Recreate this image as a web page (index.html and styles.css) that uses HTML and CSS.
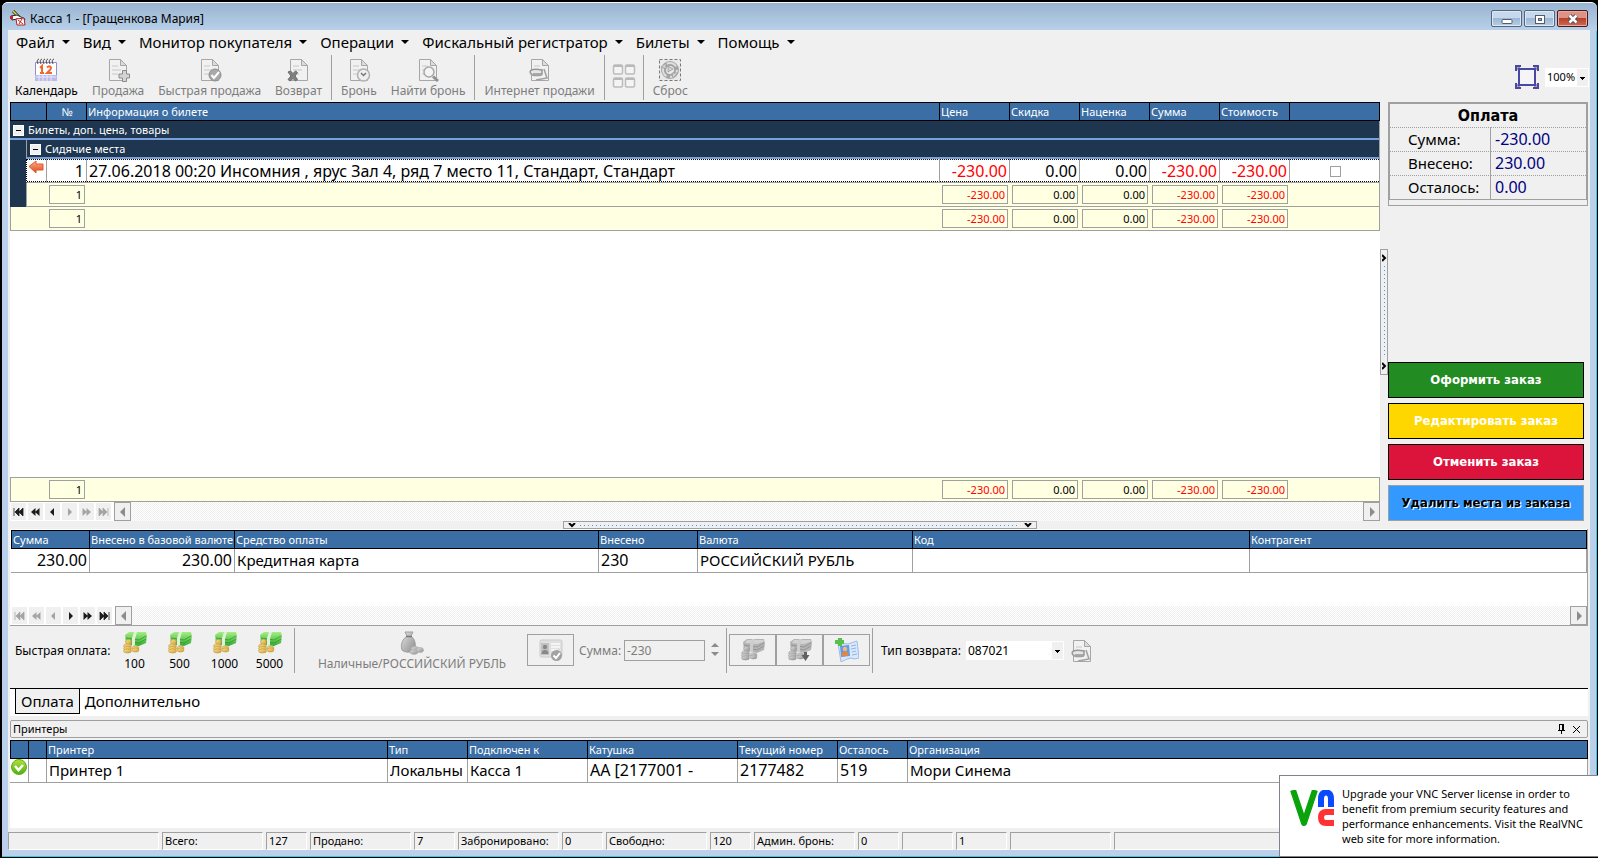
FILE: index.html
```html
<!DOCTYPE html>
<html lang="ru">
<head>
<meta charset="utf-8">
<title>Касса 1 - [Гращенкова Мария]</title>
<link rel="stylesheet" href="styles.css">
</head>
<body>
<svg class="defs" aria-hidden="true">
  <defs>
    <linearGradient id="g-green" x1="0" y1="0" x2="0" y2="1"><stop offset="0" stop-color="#a4ef84"/><stop offset="1" stop-color="#35a832"/></linearGradient>
    <linearGradient id="g-gold" x1="0" y1="0" x2="1" y2="1"><stop offset="0" stop-color="#fae596"/><stop offset="1" stop-color="#d09c34"/></linearGradient>
    <linearGradient id="g-gray" x1="0" y1="0" x2="1" y2="1"><stop offset="0" stop-color="#e2e2e2"/><stop offset="1" stop-color="#8c8c8c"/></linearGradient>
    <linearGradient id="g-red" x1="0" y1="0" x2="0" y2="1"><stop offset="0" stop-color="#ffb08a"/><stop offset="1" stop-color="#e0451a"/></linearGradient>
    <linearGradient id="g-ok" x1="0" y1="0" x2="0" y2="1"><stop offset="0" stop-color="#b4e23c"/><stop offset="1" stop-color="#4fae12"/></linearGradient>
  </defs>
  <symbol id="sheet" viewBox="0 0 24 24"><path d="M3.500 1.500h11l6 6v15h-17z" fill="#f1f1f1" stroke="#a6a6a6"/><path d="M14.500 1.500v6h6z" fill="#dcdcdc" stroke="#a6a6a6"/><path d="M6 8h6M6 12h9M6 16h6" stroke="#dcdcdc" stroke-width="2"/></symbol>
  <symbol id="calendar" viewBox="0 0 24 24"><path d="M1.500 4.500h21v18h-21z" fill="#fff" stroke="#8f8fd0"/><path d="M1 17h22v6H1z" fill="#b9b9ea"/><path d="M2 19h20M5 16v7M9 16v7M13 16v7M17 16v7" stroke="#e9e9fb"/><path d="M4 6q-2-4 1-5M7 6q-2-4 1-5M10 6q-2-4 1-5M13 6q-2-4 1-5M16 6q-2-4 1-5M19 6q-2-4 1-5" fill="none" stroke="#4a4a4a"/><path d="M6 10l2-2v7M6 15h4M13 9.500q2.500-2.500 4 0 .5 1.500-4 5.500h5" fill="none" stroke="#f2672b" stroke-width="2"/></symbol>
  <symbol id="sheet-plus" viewBox="0 0 24 24"><use href="#sheet" width="24" height="24"/><path d="M16.500 12.500h4v3.500h3v4h-3v3.500h-4v-3.500h-3.500v-4h3.500z" fill="#d4d4d4" stroke="#8a8a8a"/></symbol>
  <symbol id="sheet-check" viewBox="0 0 24 24"><use href="#sheet" width="24" height="24"/><circle cx="17" cy="17" r="6" fill="#a9a9a9" stroke="#8d8d8d"/><path d="M13.500 17l2.500 3 5-6" fill="none" stroke="#fff" stroke-width="2"/></symbol>
  <symbol id="sheet-x" viewBox="0 0 24 24"><use href="#sheet" width="24" height="24"/><path d="M1 14l2.500-1L6 15.500 8.500 13l2 1.500L8 18l2.500 3.500-2 1.500L6 20.500 3 23l-2-1.500L4 18z" fill="#808080" stroke="#6b6b6b"/></symbol>
  <symbol id="sheet-clock" viewBox="0 0 24 24"><use href="#sheet" width="24" height="24"/><circle cx="16.500" cy="17" r="6" fill="#efefef" stroke="#b0b0b0" stroke-width="1.500"/><path d="M14 15l2.500 2.500 2.500-2.500" fill="none" stroke="#777" stroke-width="1.500"/></symbol>
  <symbol id="sheet-find" viewBox="0 0 24 24"><use href="#sheet" width="24" height="24"/><circle cx="13" cy="14" r="5" fill="#f4f4f4" stroke="#a6a6a6" stroke-width="1.500"/><path d="M17 18.500l5 4.500" stroke="#929292" stroke-width="3"/></symbol>
  <symbol id="sheet-web" viewBox="0 0 24 24"><use href="#sheet" width="24" height="24"/><path d="M2 14q1-4 12-2v4H5" fill="#e6e6e6" stroke="#969696" stroke-width="1.500"/><path d="M2 14q1 5 12 3M16 11l3 9-11 2" fill="none" stroke="#a0a0a0" stroke-width="1.500"/></symbol>
  <symbol id="windows" viewBox="0 0 24 24"><g fill="#f4f4f4" stroke="#bcbcbc" stroke-width="1.500"><rect x="1.500" y="1" width="9" height="9" rx="1.500"/><rect x="13.500" y="1" width="9" height="9" rx="1.500"/><rect x="1.500" y="14" width="9" height="9" rx="1.500"/><rect x="13.500" y="14" width="9" height="9" rx="1.500"/></g><path d="M2 2h8M14 2h8M2 15h8M14 15h8" stroke="#b8b8b8" stroke-width="2"/></symbol>
  <symbol id="reset" viewBox="0 0 24 24"><rect x="1.500" y="1.500" width="21" height="21" fill="#e9e9e9" stroke="#777" stroke-dasharray="3 2"/><circle cx="12" cy="12" r="6.500" fill="none" stroke="#a3a3a3" stroke-width="5"/><circle cx="12" cy="12" r="7" fill="none" stroke="#dedede" stroke-width="2" stroke-dasharray="11 3.500"/><path d="M10 8l5 3-5 3zM3 9l5-4v6zM15 20l5-5h-6z" fill="#d0d0d0" stroke="#949494" stroke-width=".7"/></symbol>
  <symbol id="fit" viewBox="0 0 24 24"><rect x="4" y="4" width="16" height="16" fill="#f5f5f7" stroke="#4848a5" stroke-width="2"/><path d="M1 6V1h5M18 1h5v5M23 18v5h-5M6 23H1v-5" fill="none" stroke="#4848a5" stroke-width="2"/><path d="M2.500 5V2.500H5M19 2.500h2.500V5M21.500 19v2.500H19M5 21.500H2.500V19" fill="none" stroke="#b78c9c"/></symbol>
  <symbol id="money" viewBox="0 0 24 24"><path d="M2 4l4-3h17l1 4-1 7-7 3-13-2z" fill="url(#g-green)"/><path d="M3 7l13 2 7-4M4 10l12 2 7-4" fill="none" stroke="#2a9a2e" stroke-width=".8"/><path d="M11 1h3l-2 7v6H9V7z" fill="#dff2d6"/><g fill="url(#g-gold)" stroke="#c39a3e" stroke-width=".6"><circle cx="5.500" cy="11" r="2.800"/><ellipse cx="4.500" cy="15" rx="4" ry="2"/><ellipse cx="4.500" cy="17.500" rx="4" ry="2"/><ellipse cx="4.500" cy="20" rx="4" ry="2"/><ellipse cx="12.500" cy="17" rx="3.500" ry="2"/><ellipse cx="12.500" cy="19" rx="3.500" ry="2"/></g></symbol>
  <symbol id="money-gray" viewBox="0 0 24 24"><path d="M2 4l4-3h17l1 4-1 7-7 3-13-2z" fill="#b4b4b4"/><path d="M6 2h17l-1 2-6 2-12-1z" fill="#d2d2d2"/><path d="M3 7l13 2 7-4M4 10l12 2 7-4" fill="none" stroke="#8c8c8c" stroke-width=".8"/><path d="M11 1h3l-2 7v6H9V7z" fill="#cdcdcd"/><g fill="url(#g-gray)" stroke="#a0a0a0" stroke-width=".6"><circle cx="5.500" cy="11" r="2.800"/><ellipse cx="4.500" cy="15" rx="4" ry="2"/><ellipse cx="4.500" cy="17.500" rx="4" ry="2"/><ellipse cx="4.500" cy="20" rx="4" ry="2"/><ellipse cx="12.500" cy="17" rx="3.500" ry="2"/><ellipse cx="12.500" cy="19" rx="3.500" ry="2"/></g></symbol>
  <symbol id="money-down" viewBox="0 0 24 24"><use href="#money-gray" width="24" height="24"/><path d="M16 14h3v3h2.500l-4 6-4-6H16z" fill="#606060"/></symbol>
  <symbol id="bag" viewBox="0 0 24 24"><path d="M5 1h8l-2 4c4 3 5 8 4 13-1 4-11 4-13 1C0 13 3 8 7 5z" fill="url(#g-gray)" stroke="#a0a0a0"/><path d="M6 5.500h6" stroke="#777" stroke-width="1.500"/><g fill="url(#g-gray)" stroke="#b0b0b0" stroke-width=".8"><ellipse cx="15" cy="18" rx="4" ry="2.500"/><ellipse cx="20" cy="19" rx="3.500" ry="2.500"/><ellipse cx="14" cy="21" rx="4" ry="2.300"/></g></symbol>
  <symbol id="card" viewBox="0 0 24 24"><rect x="1" y="2" width="22" height="17" rx="1.500" fill="#e0e0e0" stroke="#cbcbcb"/><path d="M2 5h8v12H2z" fill="#c2c2c2"/><circle cx="6" cy="9" r="2.200" fill="#888"/><path d="M2.500 16q0-4 3.500-4t3.500 4z" fill="#888"/><path d="M12 6h9M12 9h9M12 12h6" stroke="#fafafa" stroke-width="1.500"/><circle cx="17.500" cy="17.500" r="5.500" fill="#a2a2a2"/><path d="M14.500 17.500l2.500 2.500 4-5" fill="none" stroke="#fff" stroke-width="2"/></symbol>
  <symbol id="client" viewBox="0 0 24 24"><path d="M3 5l10 1 9-3 2 17-5 1-3-1-4 1-6 3z" fill="#d9e8fb" stroke="#9dbbe4"/><path d="M16 8l5-1M16 11l5-1M17 14l4-1M17 17l5-1" stroke="#8fb4e8"/><path d="M5 8l9-1 1 11-9 1z" fill="#5f9be8"/><circle cx="10" cy="11" r="2.300" fill="#f2b67e"/><path d="M6.500 18.500q0-5 3.500-5t3.500 4z" fill="#e5863a"/><path d="M3 0h4v2h2v4H7v2H3V6H0V2h3z" fill="#56c04a"/></symbol>
  <symbol id="app" viewBox="0 0 16 16"><path d="M3 1l6 6" stroke="#222" stroke-width="3"/><path d="M3 1l6 6" stroke="#e9e23a" stroke-width="1.500"/><path d="M1 6l6-1 8 4-1 2-7-2-5 1z" fill="#fff" stroke="#222"/><path d="M0 6h3v3H0z" fill="#d32020"/><path d="M6 9l8-1 1 7H7z" fill="#fff" stroke="#a22"/><path d="M8 10l5 4M12 9l-3 5" stroke="#d32020"/></symbol>
  <symbol id="arrow-left" viewBox="0 0 16 14"><path d="M1 6.500L8 1v3h7v6H8v3z" fill="url(#g-red)" stroke="#dc5a28"/></symbol>
  <symbol id="ok" viewBox="0 0 16 16"><circle cx="8" cy="8" r="7.500" fill="url(#g-ok)" stroke="#59b21a"/><path d="M4 7l3.500 4L12 6" fill="none" stroke="#fff" stroke-width="2.500"/></symbol>
  <symbol id="n-first" viewBox="0 0 11 8"><path d="M1 0v8M6 0v8L2 4zM10 0v8L6 4z" fill="currentColor" stroke="currentColor" stroke-width=".8"/></symbol>
  <symbol id="n-prevpage" viewBox="0 0 11 8"><path d="M5.500 0v8L1 4zM9.500 0v8L5 4z" fill="currentColor"/></symbol>
  <symbol id="n-prev" viewBox="0 0 11 8"><path d="M7 0v8L3 4z" fill="currentColor"/></symbol>
  <symbol id="n-next" viewBox="0 0 11 8"><path d="M4 0v8l4-4z" fill="currentColor"/></symbol>
  <symbol id="n-nextpage" viewBox="0 0 11 8"><path d="M1.500 0v8L6 4zM5.500 0v8L10 4z" fill="currentColor"/></symbol>
  <symbol id="n-last" viewBox="0 0 11 8"><path d="M10 0v8M1 0v8l4-4zM5 0v8l4-4z" fill="currentColor" stroke="currentColor" stroke-width=".8"/></symbol>
  <symbol id="tri-left" viewBox="0 0 6 10"><path d="M5 0v10L0 5z" fill="currentColor"/></symbol>
  <symbol id="tri-right" viewBox="0 0 6 10"><path d="M1 0v10l5-5z" fill="currentColor"/></symbol>
  <symbol id="chev-down" viewBox="0 0 8 5"><path d="M1 0l3 3 3-3" fill="none" stroke="#000" stroke-width="2"/></symbol>
  <symbol id="chev-right" viewBox="0 0 5 8"><path d="M0 1l3 3-3 3" fill="none" stroke="#000" stroke-width="2"/></symbol>
</svg>

<div class="window">
  <header class="titlebar">
    <svg class="app-icon"><use href="#app"/></svg>
    <h1 class="title">Касса 1 - [Гращенкова Мария]</h1>
    <div class="window-buttons">
      <button class="win-btn" aria-label="Свернуть"><svg width="12" height="12" viewBox="0 0 12 12"><rect x="1" y="6.500" width="10" height="4" rx="1" fill="#fff" stroke="#555b69"/></svg></button>
      <button class="win-btn" aria-label="Развернуть"><svg width="12" height="12" viewBox="0 0 12 12"><rect x="1.500" y="2.500" width="9" height="8" fill="#fff" stroke="#555b69"/><rect x="4.500" y="5.500" width="3" height="2" fill="#8fb0d0" stroke="#555b69"/></svg></button>
      <button class="win-btn win-close" aria-label="Закрыть"><svg width="12" height="12" viewBox="0 0 12 12"><path d="M2.500 2.500l7 7M9.500 2.500l-7 7" stroke="#4c4c5c" stroke-width="4.500"/><path d="M2.500 2.500l7 7M9.500 2.500l-7 7" stroke="#fff" stroke-width="2.500"/></svg></button>
    </div>
  </header>

  <div class="client">
    <nav class="menu">
      <button class="menu-item">Файл</button>
      <button class="menu-item">Вид</button>
      <button class="menu-item">Монитор покупателя</button>
      <button class="menu-item">Операции</button>
      <button class="menu-item">Фискальный регистратор</button>
      <button class="menu-item">Билеты</button>
      <button class="menu-item">Помощь</button>
    </nav>

    <div class="toolbar">
      <button class="tool tool-on"><svg><use href="#calendar"/></svg>Календарь</button>
      <button class="tool"><svg><use href="#sheet-plus"/></svg>Продажа</button>
      <button class="tool"><svg><use href="#sheet-check"/></svg>Быстрая продажа</button>
      <button class="tool"><svg><use href="#sheet-x"/></svg>Возврат</button>
      <span class="sep"></span>
      <button class="tool"><svg><use href="#sheet-clock"/></svg>Бронь</button>
      <button class="tool"><svg><use href="#sheet-find"/></svg>Найти бронь</button>
      <span class="sep"></span>
      <button class="tool"><svg><use href="#sheet-web"/></svg>Интернет продажи</button>
      <span class="sep"></span>
      <button class="tool tool-icon" aria-label="Окна"><svg><use href="#windows"/></svg></button>
      <span class="sep"></span>
      <button class="tool"><svg><use href="#reset"/></svg>Сброс</button>
      <div class="zoom">
        <button class="zoom-fit" aria-label="По размеру окна"><svg><use href="#fit"/></svg></button>
        <select class="combo combo-zoom" aria-label="Масштаб"><option>100%</option></select>
      </div>
    </div>

    <div class="work">
      <section class="order">
        <table class="grid order-grid">
          <colgroup><col class="w-indent"><col class="w-mark"><col class="w-num"><col><col class="w-sum"><col class="w-sum"><col class="w-sum"><col class="w-sum"><col class="w-sum"><col class="w-flag"></colgroup>
          <thead>
            <tr><th colspan="2"></th><th class="center">№</th><th>Информация о билете</th><th>Цена</th><th>Скидка</th><th>Наценка</th><th>Сумма</th><th>Стоимость</th><th></th></tr>
          </thead>
          <tbody>
            <tr class="group"><td colspan="10"><button class="toggle" aria-label="Свернуть группу"></button>Билеты, доп. цена, товары</td></tr>
            <tr class="group group-sub"><td class="indent"></td><td colspan="9"><button class="toggle" aria-label="Свернуть группу"></button>Сидячие места</td></tr>
            <tr class="ticket"><td class="indent"></td><td class="mark"><svg width="16" height="14"><use href="#arrow-left"/></svg></td><td class="num">1</td><td>27.06.2018 00:20 Инсомния , ярус Зал 4, ряд 7 место 11, Стандарт, Стандарт</td><td class="num neg">-230.00</td><td class="num">0.00</td><td class="num">0.00</td><td class="num neg">-230.00</td><td class="num neg">-230.00</td><td class="center"><input type="checkbox" class="check" aria-label="Отметить место"></td></tr>
            <tr class="total"><td class="indent"></td><td class="edge"></td><td><span class="box">1</span></td><td></td><td><span class="box neg">-230.00</span></td><td><span class="box">0.00</span></td><td><span class="box">0.00</span></td><td><span class="box neg">-230.00</span></td><td><span class="box neg">-230.00</span></td><td></td></tr>
            <tr class="total"><td colspan="2" class="edge"></td><td><span class="box">1</span></td><td></td><td><span class="box neg">-230.00</span></td><td><span class="box">0.00</span></td><td><span class="box">0.00</span></td><td><span class="box neg">-230.00</span></td><td><span class="box neg">-230.00</span></td><td></td></tr>
          </tbody>
        </table>
        <div class="blank"></div>
        <table class="grid order-grid grand">
          <colgroup><col class="w-indent"><col class="w-mark"><col class="w-num"><col><col class="w-sum"><col class="w-sum"><col class="w-sum"><col class="w-sum"><col class="w-sum"><col class="w-flag"></colgroup>
          <tbody>
            <tr class="total"><td colspan="2" class="edge"></td><td><span class="box">1</span></td><td></td><td><span class="box neg">-230.00</span></td><td><span class="box">0.00</span></td><td><span class="box">0.00</span></td><td><span class="box neg">-230.00</span></td><td><span class="box neg">-230.00</span></td><td></td></tr>
          </tbody>
        </table>
        <div class="navigator">
          <button class="nav" aria-label="В начало"><svg><use href="#n-first"/></svg></button>
          <button class="nav" aria-label="Страница назад"><svg><use href="#n-prevpage"/></svg></button>
          <button class="nav" aria-label="Назад"><svg><use href="#n-prev"/></svg></button>
          <button class="nav nav-off" aria-label="Вперёд"><svg><use href="#n-next"/></svg></button>
          <button class="nav nav-off" aria-label="Страница вперёд"><svg><use href="#n-nextpage"/></svg></button>
          <button class="nav nav-off" aria-label="В конец"><svg><use href="#n-last"/></svg></button>
          <div class="scroll"><button class="scroll-btn" aria-label="Прокрутить влево"><svg><use href="#tri-left"/></svg></button><button class="scroll-btn" aria-label="Прокрутить вправо"><svg><use href="#tri-right"/></svg></button></div>
        </div>
      </section>

      <div class="splitter-v"><div class="grip grip-v"><svg width="5" height="8"><use href="#chev-right"/></svg><span class="dots-v"></span><svg width="5" height="8"><use href="#chev-right"/></svg></div></div>

      <aside class="side">
        <div class="payment">
          <table class="pay-table">
            <colgroup><col class="y-name"><col></colgroup>
            <thead><tr><th colspan="2">Оплата</th></tr></thead>
            <tbody>
              <tr><td>Сумма:</td><td class="pay-value">-230.00</td></tr>
              <tr><td>Внесено:</td><td class="pay-value">230.00</td></tr>
              <tr><td>Осталось:</td><td class="pay-value">0.00</td></tr>
            </tbody>
          </table>
        </div>
        <div class="actions">
          <button class="action action-green">Оформить заказ</button>
          <button class="action action-yellow">Редактировать заказ</button>
          <button class="action action-red">Отменить заказ</button>
          <button class="action action-blue">Удалить места из заказа</button>
        </div>
      </aside>
    </div>

    <div class="splitter-h"><div class="grip grip-h"><svg width="8" height="5"><use href="#chev-down"/></svg><span class="dots-h"></span><svg width="8" height="5"><use href="#chev-down"/></svg></div></div>

    <section class="payments">
      <table class="grid pay-grid">
        <colgroup><col class="p-sum"><col class="p-base"><col class="p-mean"><col class="p-paid"><col class="p-cur"><col class="p-code"><col></colgroup>
        <thead><tr><th>Сумма</th><th>Внесено в базовой валюте</th><th>Средство оплаты</th><th>Внесено</th><th>Валюта</th><th>Код</th><th>Контрагент</th></tr></thead>
        <tbody><tr><td class="num">230.00</td><td class="num">230.00</td><td class="word">Кредитная карта</td><td>230</td><td class="word">РОССИЙСКИЙ РУБЛЬ</td><td></td><td></td></tr></tbody>
      </table>
      <div class="navigator">
        <button class="nav nav-off" aria-label="В начало"><svg><use href="#n-first"/></svg></button>
        <button class="nav nav-off" aria-label="Страница назад"><svg><use href="#n-prevpage"/></svg></button>
        <button class="nav nav-off" aria-label="Назад"><svg><use href="#n-prev"/></svg></button>
        <button class="nav" aria-label="Вперёд"><svg><use href="#n-next"/></svg></button>
        <button class="nav" aria-label="Страница вперёд"><svg><use href="#n-nextpage"/></svg></button>
        <button class="nav" aria-label="В конец"><svg><use href="#n-last"/></svg></button>
        <div class="scroll"><button class="scroll-btn" aria-label="Прокрутить влево"><svg><use href="#tri-left"/></svg></button><button class="scroll-btn" aria-label="Прокрутить вправо"><svg><use href="#tri-right"/></svg></button></div>
      </div>
    </section>

    <div class="paybar">
      <span class="pay-label">Быстрая оплата:</span>
      <button class="tool tool-on quick"><svg><use href="#money"/></svg>100</button>
      <button class="tool tool-on quick"><svg><use href="#money"/></svg>500</button>
      <button class="tool tool-on quick"><svg><use href="#money"/></svg>1000</button>
      <button class="tool tool-on quick"><svg><use href="#money"/></svg>5000</button>
      <span class="sep"></span>
      <button class="tool cash"><svg><use href="#bag"/></svg>Наличные/РОССИЙСКИЙ РУБЛЬ</button>
      <button class="framed" aria-label="Карта клиента"><svg><use href="#card"/></svg></button>
      <label class="amount-label" for="amount">Сумма:</label>
      <input class="amount" id="amount" type="text" value="-230">
      <span class="spin"><button class="spin-btn spin-up" aria-label="Больше"></button><button class="spin-btn spin-down" aria-label="Меньше"></button></span>
      <span class="sep"></span>
      <div class="framed-group">
        <button class="framed" aria-label="Внести деньги"><svg><use href="#money-gray"/></svg></button>
        <button class="framed" aria-label="Вернуть деньги"><svg><use href="#money-down"/></svg></button>
        <button class="framed" aria-label="Добавить клиента"><svg><use href="#client"/></svg></button>
      </div>
      <span class="sep"></span>
      <label class="type-label" for="refund">Тип возврата:</label>
      <select class="combo combo-type" id="refund"><option>087021</option></select>
      <button class="tool web-btn" aria-label="Интернет возврат"><svg><use href="#sheet-web"/></svg></button>
    </div>

    <div class="tabs">
      <button class="tab tab-active">Оплата</button>
      <button class="tab">Дополнительно</button>
    </div>

    <section class="printers">
      <div class="dock-title"><span>Принтеры</span>
        <div class="dock-buttons">
          <button class="dock-btn" aria-label="Закрепить"><svg width="9" height="10" viewBox="0 0 9 10"><path d="M2.500 0v6M2 .5h5M6 0v6M1 6.500h7M4.500 6v4" fill="none" stroke="#000"/><path d="M5 0h2v6H5z"/></svg></button>
          <button class="dock-btn" aria-label="Закрыть панель"><svg width="9" height="9" viewBox="0 0 9 9"><path d="M1 1l7 7M8 1l-7 7" stroke="#000"/></svg></button>
        </div>
      </div>
      <table class="grid printer-grid">
        <colgroup><col class="r-mark"><col class="r-mark"><col class="r-name"><col class="r-type"><col class="r-conn"><col class="r-roll"><col class="r-cur"><col class="r-left"><col></colgroup>
        <thead><tr><th></th><th></th><th>Принтер</th><th>Тип</th><th>Подключен к</th><th>Катушка</th><th>Текущий номер</th><th>Осталось</th><th>Организация</th></tr></thead>
        <tbody><tr><td class="mark"><svg width="16" height="16"><use href="#ok"/></svg></td><td></td><td class="word">Принтер 1</td><td class="word">Локальны</td><td class="word">Касса 1</td><td>AA [2177001 -</td><td>2177482</td><td>519</td><td class="word">Мори Синема</td></tr></tbody>
      </table>
      <div class="blank"></div>
    </section>

    <footer class="status">
      <span class="s-first"></span><span class="s-name">Всего:</span><span class="s-val">127</span><span class="s-name">Продано:</span><span class="s-val">7</span><span class="s-name">Забронировано:</span><span class="s-val">0</span><span class="s-name">Свободно:</span><span class="s-val">120</span><span class="s-name">Админ. бронь:</span><span class="s-val">0</span><span class="s-mid"></span><span class="s-mid">1</span><span class="s-name"></span><span class="s-rest"></span>
    </footer>
  </div>

  <aside class="toast">
    <svg width="44" height="36" viewBox="0 0 44 36"><path d="M3 0L14 33L25 0" fill="none" stroke="#0ba30b" stroke-width="6" stroke-linejoin="round"/><path d="M31 17V9q0-6.500 5-6.500T41 9v8" fill="none" stroke="#0a4bff" stroke-width="6"/><path d="M44 22H36q-5 0-5 5.500T36 33h8" fill="none" stroke="#ff3333" stroke-width="6"/></svg>
    <p>Upgrade your VNC Server license in order to benefit from premium security features and performance enhancements. Visit the RealVNC web site for more information.</p>
  </aside>
</div>
</body>
</html>
```
FILE: styles.css
```css
* { box-sizing: border-box; }

html, body { height: 100%; }

body {
  margin: 0;
  background: #000;
  color: #000;
  font-family: "Noto Sans", "DejaVu Sans", sans-serif;
  font-size: 11px;
  line-height: 16px;
  overflow: hidden;
}

button, input, select {
  margin: 0;
  padding: 0;
  border: 0;
  background: none;
  color: inherit;
  font: inherit;
}

svg { display: block; flex: none; }
.defs { position: absolute; width: 0; height: 0; }
table { border-collapse: separate; border-spacing: 0; }

/* Window frame */
.window {
  position: relative;
  display: flex;
  flex-direction: column;
  height: 100vh;
  padding: 0 6px 7px;
  border: 2px solid #000;
  border-right-width: 1px;
  border-bottom-width: 1px;
  border-radius: 8px 8px 0 0;
  background: #b9d1ea;
  box-shadow: inset -1px -1px 0 #35c8e8;
}
.window::before {
  content: "";
  position: absolute;
  inset: 0 0 auto;
  height: 28px;
  border-radius: 6px 6px 0 0;
  border-top: 1px solid #f4f8fc;
  background: linear-gradient(#99b4d1, #b9d1ea);
}
.titlebar {
  position: relative;
  display: flex;
  align-items: flex-start;
  height: 28px;
  padding-top: 8px;
  flex: none;
}
.app-icon { width: 16px; height: 16px; margin-left: 2px; }
.title {
  flex: 1;
  margin: 0 0 0 4px;
  font-size: 12px;
  font-weight: 400;
  line-height: 18px;
}
.window-buttons { display: flex; gap: 2px; padding-right: 3px; }
.win-btn {
  display: flex;
  align-items: center;
  justify-content: center;
  width: 31px;
  height: 17px;
  border: 1px solid #55657c;
  border-radius: 2px;
  background: linear-gradient(#c6d9ec 50%, #9db8d4 50%, #b5cde6);
  box-shadow: inset 0 0 0 1px #dbe8f5;
}
.win-close {
  border-color: #48181c;
  background: linear-gradient(#dc9384 50%, #b83f2a 50%, #cd6a50);
  box-shadow: inset 0 0 0 1px #e6aca0;
}

.client {
  position: relative;
  display: flex;
  flex-direction: column;
  flex: 1;
  min-height: 0;
  margin-right: 1px;
  background: #f0f0f0;
}

/* Menu */
.menu { display: flex; gap: 13px; height: 25px; padding: 0 0 2px 8px; flex: none; }
.menu-item {
  display: flex;
  align-items: center;
  gap: 7px;
  font-size: 15px;
}
.menu-item::after {
  content: "";
  border: 4px solid transparent;
  border-top-color: #000;
  border-bottom: 0;
}

/* Toolbars */
.toolbar { display: flex; height: 47px; flex: none; align-items: flex-start; }
.tool {
  display: flex;
  flex-direction: column;
  align-items: center;
  height: 45px;
  padding: 3px 7px 0;
  color: #7d7d7d;
  font-size: 12px;
  white-space: nowrap;
}
.tool svg { width: 24px; height: 24px; margin-bottom: 1px; }
.tool-on { color: #000; }
.tool-icon { padding: 9px 5px 0; }
.sep { width: 1px; height: 45px; margin: 0 2px; flex: none; background: #a0a0a0; }
.zoom { display: flex; align-items: center; gap: 6px; margin-left: auto; padding: 10px 1px 0 0; }
.zoom-fit svg { width: 24px; height: 24px; }

.combo {
  height: 19px;
  padding: 0 16px 0 3px;
  border: 1px solid #fff;
  appearance: none;
  color: #000;
  font-size: 12px;
  background:
    linear-gradient(#000, #000) right 3px top 8px / 5px 1px no-repeat,
    linear-gradient(#000, #000) right 4px top 9px / 3px 1px no-repeat,
    linear-gradient(#000, #000) right 5px top 10px / 1px 1px no-repeat,
    linear-gradient(#f0f0f0, #f0f0f0) right 0 top 0 / 11px 100% no-repeat,
    #fff;
}
.combo-zoom { width: 44px; padding: 0 0 0 1px; font-size: 11px; }
.combo-type { width: 98px; padding-left: 1px; }

/* Order area */
.work { display: flex; flex: 1; min-height: 0; padding: 0 2px; }
.order { display: flex; flex-direction: column; flex: 1; min-width: 0; }
.blank { flex: 1; background: #fff; }

.grid { width: 100%; table-layout: fixed; flex: none; }
.grid th {
  height: 19px;
  padding: 0 0 0 1px;
  border: 1px solid #000;
  border-right: 0;
  background: #3a6ea5;
  color: #fff;
  font-weight: 400;
  line-height: 17px;
  text-align: left;
  white-space: nowrap;
  overflow: hidden;
}
.grid th:last-child { border-right: 1px solid #000; }
.grid td {
  height: 24px;
  padding: 0 0 0 2px;
  border-left: 1px solid #a0a0a0;
  border-bottom: 1px solid #a0a0a0;
  background: #fff;
  font-size: 16px;
  line-height: 23px;
  white-space: nowrap;
  overflow: hidden;
}
.grid td:last-child { border-right: 1px solid #a0a0a0; }
.grid .center { text-align: center; }
.grid .num { padding-right: 2px; text-align: right; }
.grid .word { font-size: 15px; }
.grid .mark { padding: 0 0 0 1px; vertical-align: top; }
.neg { color: #f00; }

.w-indent { width: 16px; }
.w-mark { width: 20px; }
.w-num { width: 40px; }
.w-sum { width: 70px; }
.w-flag { width: 91px; }

.order-grid .group td {
  height: 19px;
  padding: 0 3px;
  border-left: 0;
  border-bottom: 2px solid #76a1dc;
  background: #1e3650;
  color: #fff;
  font-size: 11px;
  line-height: 17px;
}
.order-grid .group-sub td + td { border-left: 1px solid #a0a0a0; }
.order-grid .indent { border: 0; background: #1e3650; }
.order-grid .group-sub .indent { border: 0; }
.toggle {
  display: inline-block;
  width: 11px;
  height: 11px;
  margin-right: 4px;
  border: 1px solid #fff;
  background: linear-gradient(#000, #000) center / 5px 1px no-repeat #f0f0f0;
  vertical-align: -1px;
}
.ticket td { line-height: 20px; }
.order-grid .ticket td:not(.indent) {
  background:
    repeating-linear-gradient(90deg, #000 0 1px, #fff 1px 2px) left top / 100% 1px no-repeat,
    repeating-linear-gradient(90deg, #000 0 1px, #fff 1px 2px) left bottom / 100% 1px no-repeat,
    #fff;
}
.order-grid .ticket .mark { padding-top: 1px; border-left: 1px dotted #000; }
.check {
  display: inline-block;
  width: 11px;
  height: 11px;
  border: 1px solid #a0a0a0;
  background: #fff;
  appearance: none;
}
.order-grid .total td {
  padding: 0;
  border-left: 0;
  font-size: 11px;
  line-height: 17px;
}
.order-grid .total td:not(.indent) { background: #ffffe1; }
.order-grid .total .edge { border-left: 1px solid #a0a0a0; }
.total .box {
  display: block;
  height: 19px;
  margin: 0 1px 0 3px;
  padding-right: 2px;
  border: 1px solid #a0a0a0;
  text-align: right;
}
.grand td { border-top: 1px solid #a0a0a0; }
.grand .total td { height: 25px; }

/* Record navigator and scroll track */
.navigator { display: flex; gap: 2px; height: 19px; padding: 1px 0 1px 1px; flex: none; background: #fff; }
.nav {
  display: flex;
  align-items: center;
  justify-content: center;
  width: 15px;
  background: #f0f0f0;
  color: #1c1c1c;
}
.nav svg { width: 11px; height: 8px; }
.nav-off { color: #a4a4a4; }
.scroll {
  display: flex;
  flex: 1;
  justify-content: space-between;
  margin: -1px 0 -1px 1px;
  background: repeating-conic-gradient(#fff 0 25%, #f0f0f0 0 50%) 0 0 / 2px 2px;
}
.scroll-btn {
  display: flex;
  align-items: center;
  justify-content: center;
  width: 17px;
  border: 1px solid #a0a0a0;
  background: #f0f0f0;
  color: #8c8c8c;
}
.scroll-btn svg { width: 6px; height: 10px; }

/* Splitters */
.splitter-v { display: flex; align-items: center; width: 8px; flex: none; }
.splitter-h { display: flex; justify-content: center; height: 8px; padding-left: 2px; flex: none; }
.grip { display: flex; border: 1px solid #a0a0a0; align-items: center; }
.grip-v { flex-direction: column; width: 8px; height: 126px; padding: 4px 0; }
.grip-h { width: 474px; height: 8px; padding: 0 4px; }
.dots-v { flex: 1; width: 1px; margin: 4px 0; background: repeating-linear-gradient(#3399ff 0 1px, transparent 1px 4px); }
.dots-h { flex: 1; height: 1px; margin: 0 4px; background: repeating-linear-gradient(90deg, #3399ff 0 1px, transparent 1px 4px); }

/* Payment summary and actions */
.side { display: flex; flex-direction: column; justify-content: space-between; width: 200px; flex: none; }
.payment { padding-bottom: 5px; border: 1px solid #a0a0a0; }
.pay-table { width: 100%; table-layout: fixed; border: 1px solid #a0a0a0; line-height: 23px; }
.y-name { width: 101px; }
.pay-table th {
  height: 23px;
  padding: 0;
  font-family: "DejaVu Sans Condensed", "DejaVu Sans", sans-serif;
  font-size: 16px;
}
.pay-table td { height: 24px; padding: 0 0 0 18px; border-top: 1px dotted #a0a0a0; font-size: 15px; }
.pay-table td:first-child { border-right: 1px solid #a0a0a0; }
.pay-table .pay-value { padding-left: 4px; color: #000080; font-size: 16px; }
.actions { display: flex; flex-direction: column; gap: 5px; padding-right: 4px; }
.action {
  height: 36px;
  border: 1px solid #000;
  color: #fff;
  font-family: "DejaVu Sans Condensed", "DejaVu Sans", sans-serif;
  font-size: 13px;
  font-weight: 700;
}
.action-green { background: #228b22; }
.action-yellow { background: #ffd700; }
.action-red { background: #dc143c; }
.action-blue { border-color: #a0a0a0; background: #3399ff; color: #000; text-shadow: 1px 1px 0 #fff; }

/* Payments list */
.payments {
  display: flex;
  flex-direction: column;
  justify-content: space-between;
  height: 97px;
  flex: none;
  margin: 0 2px;
  padding: 1px 0 0 1px;
  border-right: 1px solid #a0a0a0;
  border-bottom: 1px solid #a0a0a0;
  background: #fff;
}
.p-sum { width: 78px; }
.p-base { width: 145px; }
.p-mean { width: 364px; }
.p-paid { width: 99px; }
.p-cur { width: 215px; }
.p-code { width: 337px; }
.pay-grid td:first-child { border-left: 0; }

/* Payment bar */
.paybar { display: flex; height: 62px; flex: none; align-items: flex-start; padding: 2px 0 0 7px; font-size: 12px; }
.pay-label, .amount-label, .type-label { line-height: 45px; white-space: nowrap; }
.pay-label { width: 97px; }
.quick { width: 45px; padding: 3px 0 0; }
.cash { width: 230px; padding: 3px 0 0; }
.framed {
  display: flex;
  align-items: center;
  justify-content: center;
  width: 47px;
  height: 32px;
  margin-top: 6px;
  border: 1px solid #a0a0a0;
}
.framed svg { width: 24px; height: 24px; }
.amount-label { margin-left: 5px; width: 45px; color: #7d7d7d; }
.amount { width: 81px; height: 21px; margin-top: 12px; padding: 0 2px; border: 1px solid #a0a0a0; color: #7d7d7d; }
.spin { display: flex; flex-direction: column; gap: 5px; margin: 15px 5px 0 6px; }
.spin-btn { border: 4px solid transparent; }
.spin-up { border-bottom-color: #8c8c8c; border-top: 0; }
.spin-down { border-top-color: #8c8c8c; border-bottom: 0; }
.framed-group { display: flex; }
.type-label { width: 85px; margin-left: 6px; }
.paybar .combo { margin-top: 13px; }
.web-btn { padding: 11px 6px 0; }

/* Tabs */
.tabs { display: flex; height: 28px; flex: none; margin: 0 2px; padding-left: 5px; border-top: 1px solid #000; background: #fff; align-items: flex-start; }
.tab { height: 25px; padding: 0 5px; font-size: 15px; line-height: 23px; }
.tab-active { border: 1px solid #000; border-top: 0; background: #f0f0f0; }

/* Printers */
.printers { display: flex; flex-direction: column; height: 112px; flex: none; margin: 4px 2px 0; }
.dock-title { display: flex; align-items: center; height: 18px; flex: none; margin-bottom: 2px; padding: 0 6px 0 2px; border: 1px solid #a0a0a0; border-radius: 2px; }
.dock-buttons { display: flex; gap: 6px; margin-left: auto; }
.printers .blank { margin-bottom: 4px; }
.r-mark { width: 18px; }
.r-name { width: 341px; }
.r-type { width: 80px; }
.r-conn { width: 120px; }
.r-roll { width: 150px; }
.r-cur { width: 100px; }
.r-left { width: 70px; }
.printer-grid td:first-child { border-left: 0; }

/* Status bar */
.status { display: flex; gap: 3px; height: 18px; flex: none; }
.status span {
  padding-left: 2px;
  border: 1px solid #a0a0a0;
  border-right-color: #fff;
  border-bottom-color: #fff;
  white-space: nowrap;
}
.s-first { width: 151px; }
.status .s-name { width: 101px; }
.s-val { width: 41px; }
.s-mid { width: 51px; }
.s-rest { flex: 1; }

/* VNC notification */
.toast {
  position: absolute;
  right: -1px;
  bottom: 0;
  display: flex;
  gap: 8px;
  width: 319px;
  height: 82px;
  padding: 14px 4px 0 10px;
  border: 1px solid #82828c;
  border-right: 0;
  background: #fff;
  line-height: 15px;
}
.toast p { flex: 1; margin: -4px 0 0; }
```
